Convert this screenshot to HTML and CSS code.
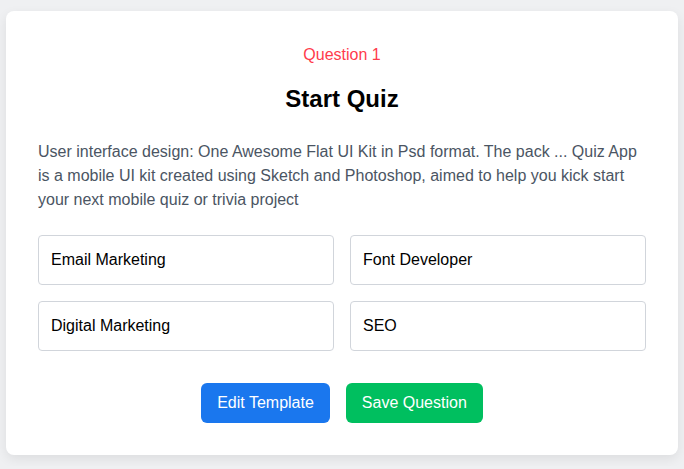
FILE: index.html
```html
<!DOCTYPE html>
<html lang="en">
<head>
<meta charset="utf-8">
<title>Start Quiz</title>
<link rel="stylesheet" href="styles.css">
</head>
<body>
<main class="card">
  <p class="label">Question 1</p>
  <h1 class="title">Start Quiz</h1>
  <p class="desc">User interface design: One Awesome Flat UI Kit in Psd format. The pack ... Quiz App is a mobile UI kit created using Sketch and Photoshop, aimed to help you kick start your next mobile quiz or trivia project</p>
  <div class="options">
    <div class="option">Email Marketing</div>
    <div class="option">Font Developer</div>
    <div class="option">Digital Marketing</div>
    <div class="option">SEO</div>
  </div>
  <div class="actions">
    <button class="btn btn-blue">Edit Template</button>
    <button class="btn btn-green">Save Question</button>
  </div>
</main>
</body>
</html>
```

FILE: styles.css
```css
* { box-sizing: border-box; }
html, body { margin: 0; padding: 0; }
body {
  background: #eff0f2;
  font-family: "Liberation Sans", Arial, sans-serif;
  padding: 11px 6px;
}
.card {
  background: #fff;
  border-radius: 8px;
  box-shadow: 0 4px 12px rgba(0,0,0,0.08);
  padding: 33px 32px 32px;
  width: 672px;
}
.label {
  margin: 0;
  text-align: center;
  color: #ff3b4c;
  font-size: 16px;
  line-height: 22px;
}
.title {
  margin: 17px 0 0;
  text-align: center;
  font-size: 24px;
  line-height: 32px;
  font-weight: 700;
  color: #000;
}
.desc {
  margin: 25px 0 0;
  color: #4b5563;
  font-size: 16px;
  line-height: 24px;
}
.options {
  margin-top: 23px;
  display: grid;
  grid-template-columns: 1fr 1fr;
  gap: 16px;
}
.option {
  height: 50px;
  border: 1px solid #d1d5db;
  border-radius: 4px;
  padding: 0 12px;
  display: flex;
  align-items: center;
  font-size: 16px;
  color: #000;
}
.actions {
  margin-top: 32px;
  display: flex;
  justify-content: center;
  gap: 16px;
}
.btn {
  border: none;
  border-radius: 6px;
  height: 40px;
  padding: 0 16px;
  font-family: "Liberation Sans", Arial, sans-serif;
  font-size: 16px;
  color: #fff;
  cursor: pointer;
}
.btn-blue { background: #1a77ee; }
.btn-green { background: #00bf5f; }
```
